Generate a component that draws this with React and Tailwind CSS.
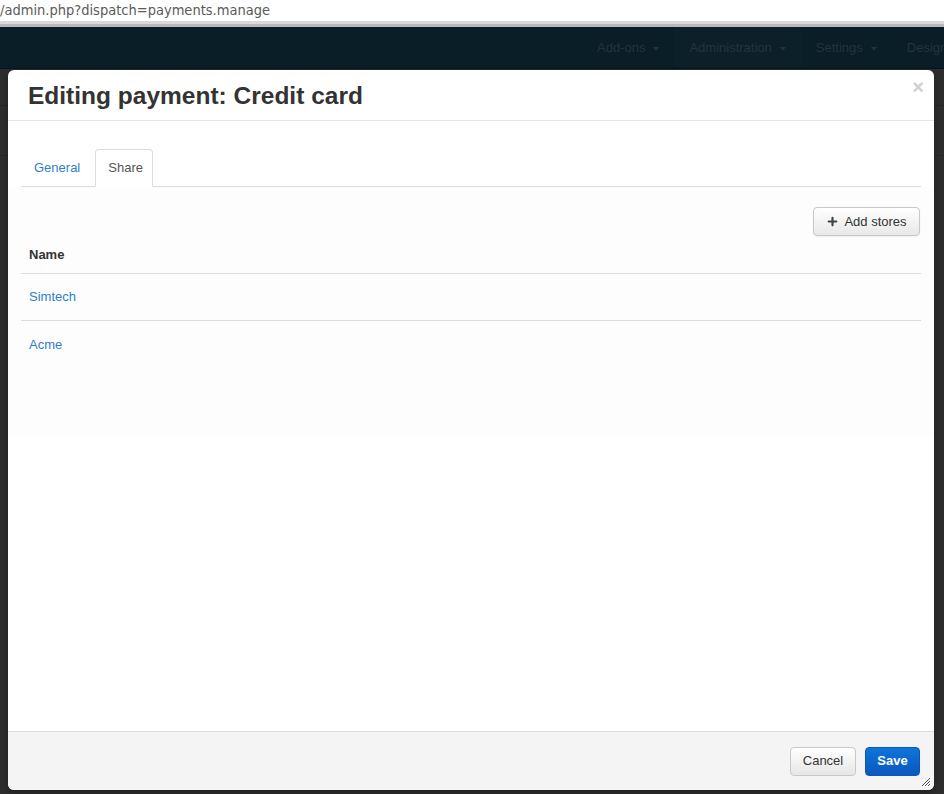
import { Plus } from "lucide-react";

const menu = ["Add-ons", "Administration", "Settings", "Design"];

function Caret() {
  return (
    <span className="ml-[8px] inline-block w-0 h-0 border-l-[3.5px] border-r-[3.5px] border-t-[4px] border-l-transparent border-r-transparent border-t-[#22323a] translate-y-[1px]" />
  );
}

export default function App() {
  const stores = ["Simtech", "Acme"];

  return (
    <div className="relative h-[794px] w-full overflow-hidden bg-[#2d2d2d] font-['Liberation_Sans',Arial,sans-serif]">
      {/* Browser address strip */}
      <div className="h-[21px] bg-white flex items-center text-[14.5px] text-[#5a5a5a] font-['DejaVu_Sans_Condensed','DejaVu_Sans',sans-serif] leading-none">
        /admin.php?dispatch=payments.manage
      </div>
      <div className="h-[3px] bg-[#dadada]" />
      <div className="h-[3px] bg-[#b9b9b9]" />

      {/* Top nav (dimmed by the overlay) */}
      <div className="h-[42px] bg-[#0a1e27] border-b border-[#06141a] flex pl-[582px] whitespace-nowrap">
        {menu.map((m) => (
          <div
            key={m}
            className={`flex items-center px-[15px] text-[13px] text-[#24343b] ${
              m === "Administration" ? "bg-[#0c2029]" : ""
            }`}
          >
            {m}
            {m !== "Design" && <Caret />}
          </div>
        ))}
      </div>

      {/* Page behind the overlay */}
      <div className="h-[37px] border-b border-[#262626]" />
      <div className="h-[50px] border-b border-[#272727]" />

      {/* Modal */}
      <div className="absolute left-[8px] top-[70px] w-[926px] h-[720px] bg-white rounded-[6px] flex flex-col overflow-hidden shadow-[0_3px_7px_rgba(0,0,0,0.3)]">
        <div className="relative h-[51px] shrink-0 border-b border-[#e5e5e5] flex items-center px-[20px]">
          <h3 className="text-[24.5px] font-bold text-[#333] leading-none mt-[3px]">
            Editing payment: Credit card
          </h3>
          <span className="absolute right-[10px] top-[7px] text-[20px] font-bold text-[#d0d0d0] leading-none">
            ×
          </span>
        </div>

        <div className="flex-1 flex flex-col">
          <div className="px-[13px] pt-[28px]">
            <div className="flex border-b border-[#ddd] h-[38px]">
              <div className="px-[12px] mr-[2px] border border-transparent flex items-center text-[13px] text-[#2f7fca]">
                General
              </div>
              <div className="pl-[12px] pr-[9px] border border-[#ddd] border-b-white bg-white rounded-t-[4px] -mb-[1px] flex items-center text-[13px] text-[#555]">
                Share
              </div>
            </div>
          </div>

          <div className="bg-[#fdfdfd] h-[250px] px-[13px] pt-[20px]">
            <div className="flex justify-end pr-[1px]">
              <button className="h-[29px] w-[107px] flex items-center justify-center gap-[5px] rounded-[4px] border border-[#c8c8c8] bg-gradient-to-b from-white to-[#e8e8e8] text-[13px] text-[#333] shadow-[inset_0_1px_0_rgba(255,255,255,0.3),0_1px_2px_rgba(0,0,0,0.05)]">
                <Plus size={13} strokeWidth={4} className="text-[#444]" />
                Add stores
              </button>
            </div>
            <div className="h-[38px] border-b border-[#ddd] flex items-center px-[8px] text-[13px] font-bold text-[#333]">
              Name
            </div>
            {stores.map((s, i) => (
              <div
                key={s}
                className={`h-[47px] flex items-center px-[8px] text-[13px] text-[#2f7fca] ${
                  i < stores.length - 1 ? "border-b border-[#ddd]" : ""
                }`}
              >
                {s}
              </div>
            ))}
          </div>

          <div className="flex-1 bg-white" />
        </div>

        <div className="relative h-[59px] shrink-0 border-t border-[#dddddd] bg-[#f4f4f4] flex items-center justify-end gap-[9px] pr-[14px]">
          <button className="h-[29px] w-[66px] rounded-[4px] border border-[#c8c8c8] bg-gradient-to-b from-white to-[#e6e6e6] text-[13px] text-[#333]">
            Cancel
          </button>
          <button className="h-[29px] w-[55px] rounded-[4px] border border-[#0a57b8] bg-gradient-to-b from-[#0f74da] to-[#0a58bf] text-[13px] font-bold text-white">
            Save
          </button>
          <svg className="absolute right-[3px] bottom-[3px]" width="10" height="10" viewBox="0 0 10 10">
            <path d="M9 1 L1 9 M9 4 L4 9 M9 7 L7 9" stroke="#555" strokeWidth="1" />
          </svg>
        </div>
      </div>
    </div>
  );
}
